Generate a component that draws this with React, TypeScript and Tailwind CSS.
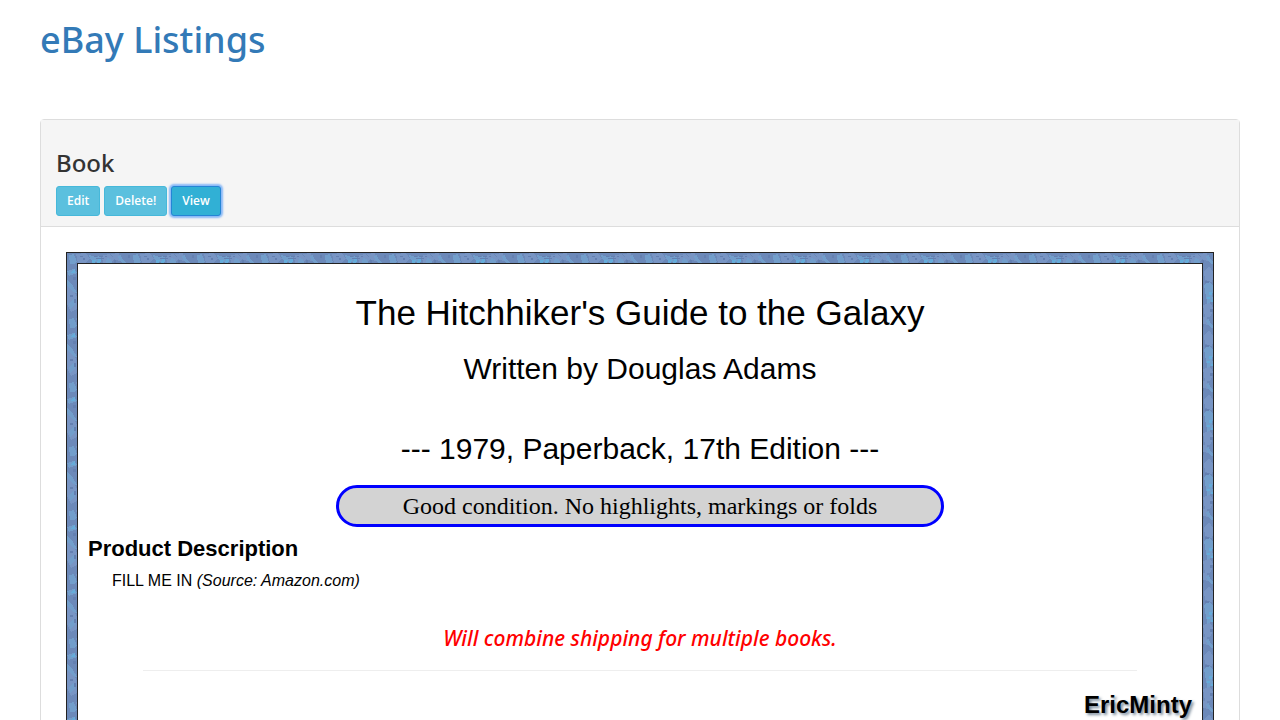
import type { ReactNode } from 'react';

const smallButton =
  'h-[30px] rounded-[3px] border px-[10px] font-["Open_Sans",sans-serif] text-xs font-semibold text-white';

function Marble() {
  return (
    <svg className="absolute inset-0 h-full w-full" aria-hidden="true">
      <defs>
        <pattern id="marble" width="64" height="64" patternUnits="userSpaceOnUse" shapeRendering="crispEdges">
          <path fill="#6c89b9" d="M0 0h64v64H0z" />
          <path
            fill="#7895c4"
            d="M9 1l10-1 4 6-5 4h-7zM34 3l8-2 5 5-3 5h-7zM44 1l8-1 2 8-6-1zM0 32l5 2 5 10v12l-6 3-4-8zM49 18l5-5 5 7-2 9-7-2zM48 52l7-2 4 6-4 8h-5z"
          />
          <path
            fill="#729ecb"
            d="M2 2l5-1 1 3 2 5-3 2H3zM22 2l6 2 6-1-1 4-6 3-4-4zM40 5l4 1 1 4h-6zM51 3l3-1 1 4 5 4-3 1-5-4zM0 18l7-2 3 4-8 3zM0 27l5 4 5 9-4-1-6-7zM2 50l5-5 1 7-5 4zM49 32l5-3 5 4-2 9-6 2zM51 41l6-2 1 9-6 3z"
          />
          <path fill="#65acda" d="M25 7h4l-1 3h-3zM31 6l4-1-2 5h-3zM4 19l4-3v4H4zM54 39h3v3h-3zM52 44h3v2h-3zM56 47h2v2h-2z" />
          <path
            fill="#6480b1"
            d="M27 3h3v1h-3zM32 3h4v1h-4zM38 3h2v1h-2zM29 5h8v1h-8zM13 3h3v1h-3zM16 5h2v2h-2zM47 7h2v3h-2zM61 2h2v3h-2zM6 24h3v3H6zM3 42h3v2H3zM7 46h2v4H7zM50 28h4v2h-4zM55 56h3v3h-3z"
          />
        </pattern>
      </defs>
      <rect width="100%" height="100%" fill="url(#marble)" />
    </svg>
  );
}

function MarbleFrame({ children }: { children: ReactNode }) {
  return (
    <div className="relative border border-[#222] p-[10px]">
      <Marble />
      <div className="relative border border-[#222] bg-white px-[10px] pt-[30px] pb-10">{children}</div>
    </div>
  );
}

export default function App() {
  return (
    <div className="h-screen overflow-hidden bg-white px-10 font-['Noto_Sans',sans-serif]">
      <h1 className="pt-5 text-4xl font-medium text-[#337ab7]">
        <a href="#">eBay Listings</a>
      </h1>

      <section className="mt-[59px] rounded border border-[#ddd]">
        <header className="border-b border-[#ddd] bg-[#f5f5f5] px-[15px] pt-7 pb-[10px]">
          <h2 className="text-2xl leading-[30px] font-medium text-[#333]">Book</h2>
          <div className="mt-2 flex gap-1">
            <button className={`${smallButton} border-[#46b8da] bg-[#5bc0de]`}>Edit</button>
            <button className={`${smallButton} border-[#46b8da] bg-[#5bc0de]`}>Delete!</button>
            <button className={`${smallButton} border-[#2585d5] bg-[#31b0d5] shadow-[0_0_2px_2px_#88b8f7]`}>
              View
            </button>
          </div>
        </header>

        <div className="p-[25px] font-['Liberation_Sans',sans-serif] text-black">
          <MarbleFrame>
            <div className="text-center">
              <h2 className="text-[35px] leading-[38px]">The Hitchhiker's Guide to the Galaxy</h2>
              <h3 className="mt-[19px] text-3xl">Written by Douglas Adams</h3>
              <h3 className="mt-11 text-3xl">--- 1979, Paperback, 17th Edition ---</h3>
              <p className="mx-auto mt-[18px] w-[55%] rounded-[25px] border-[3px] border-[blue] bg-[lightgray] font-['Liberation_Serif',serif] text-2xl leading-9">
                Good condition. No highlights, markings or folds
              </p>
            </div>

            <h4 className="mt-2 text-[22px] leading-7 font-bold">Product Description</h4>
            <p className="mt-[6px] pl-6 text-base">
              FILL ME IN <em>(Source: Amazon.com)</em>
            </p>

            <p className="mt-[31px] text-center font-['Noto_Sans',sans-serif] text-[21px] leading-7 font-medium text-[red] italic">
              Will combine shipping for multiple books.
            </p>
            <hr className="mx-auto mt-[18px] w-[90%] border-[#eee]" />
            <p className="mt-[18px] text-right text-2xl font-bold [text-shadow:2px_2px_3px_#789]">EricMinty</p>
          </MarbleFrame>
        </div>
      </section>
    </div>
  );
}
